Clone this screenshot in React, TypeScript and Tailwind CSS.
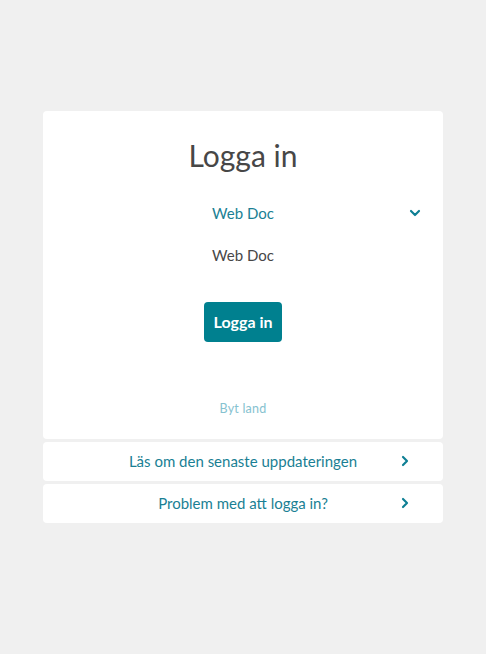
import { ChevronDown, ChevronRight } from "lucide-react";

const font = { fontFamily: "Lato, 'Noto Sans', sans-serif" };

function LinkCard({ text }: { text: string }) {
  return (
    <div className="relative w-[400px] h-[39px] bg-white rounded-[4px] flex items-center justify-center">
      <span className="text-[15px] text-[#1a7f94]">{text}</span>
      <ChevronRight className="absolute right-[30px] top-[11px] w-[16px] h-[16px] text-[#0e7f94]" strokeWidth={3.2} />
    </div>
  );
}

export default function App() {
  return (
    <div className="min-h-screen bg-[#f0f0f0] flex flex-col items-center pt-[111px]" style={font}>
      {/* Login card */}
      <div className="w-[400px] h-[328px] bg-white rounded-[4px] flex flex-col items-center">
        <h1 className="mt-[26px] h-[36px] leading-[36px] text-[30px] text-[#474747]">Logga in</h1>
        <div className="relative w-full mt-[28px] h-[24px] flex items-center justify-center">
          <span className="text-[15px] text-[#1a7f94]">Web Doc</span>
          <ChevronDown className="absolute right-[20px] top-[4px] w-[16px] h-[16px] text-[#0e7f94]" strokeWidth={3.2} />
        </div>
        <div className="mt-[18px] h-[24px] leading-[24px] text-[15px] text-[#474747]">Web Doc</div>
        <button className="mt-[35px] w-[78px] h-[40px] rounded-[4px] bg-[#00808f] text-white font-bold text-[16px]">
          Logga in
        </button>
        <div className="mt-[58px] text-[12.5px] tracking-[0.2px] text-[#86c2d0]">Byt land</div>
      </div>
      <div className="h-[3px]" />
      <LinkCard text="Läs om den senaste uppdateringen" />
      <div className="h-[3px]" />
      <LinkCard text="Problem med att logga in?" />
    </div>
  );
}
